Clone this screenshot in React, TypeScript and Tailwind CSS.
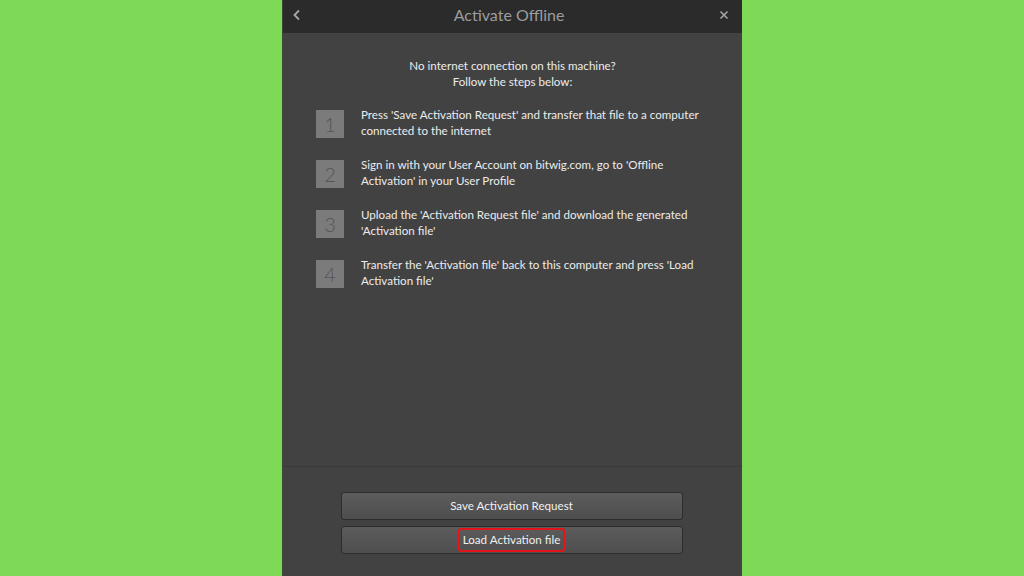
import React from 'react';

const steps = [
  {
    n: '1',
    text: "Press 'Save Activation Request' and transfer that file to a computer connected to the internet",
  },
  {
    n: '2',
    text: "Sign in with your User Account on bitwig.com, go to 'Offline Activation' in your User Profile",
  },
  {
    n: '3',
    text: "Upload the 'Activation Request file' and download the generated 'Activation file'",
  },
  {
    n: '4',
    text: "Transfer the 'Activation file' back to this computer and press 'Load Activation file'",
  },
];

export default function App() {
  return (
    <div
      className="w-[1024px] h-[576px] bg-[#7ed957] flex justify-center overflow-hidden"
      style={{ fontFamily: 'Lato, "Open Sans", sans-serif' }}
    >
      <div className="w-[460px] h-full flex flex-col bg-[#424242] border-l border-[#3a4a34]">
        {/* header */}
        <header className="h-[33px] shrink-0 bg-[#2b2b2b] flex items-center justify-between pl-[8px] pr-[13px] pb-[4px]">
          <svg className="w-[12px] h-[12px] text-[#a8a8a8]" viewBox="0 0 12 12" fill="none" stroke="currentColor" strokeWidth={1.8}>
            <path d="M8 1.5L3.5 6L8 10.5" />
          </svg>
          <h1 className="text-[16px] text-[#9c9c9c] leading-none -ml-[4px]">Activate Offline</h1>
          <svg className="w-[10px] h-[10px] text-[#a8a8a8]" viewBox="0 0 10 10" fill="none" stroke="currentColor" strokeWidth={1.5}>
            <path d="M1.5 1.5l7 7M8.5 1.5l-7 7" />
          </svg>
        </header>

        {/* body */}
        <main className="h-[434px] shrink-0 border-b border-[#3a3a3a] pt-[25px]">
          <p className="text-center text-[11.6px] leading-[16px] text-[#ececec]">
            No internet connection on this machine?
            <br />
            Follow the steps below:
          </p>
          <ol className="mt-[20px] pl-[33px] pr-[30px] flex flex-col gap-[21px]">
            {steps.map((s) => (
              <li key={s.n} className="flex items-start gap-[17px]">
                <div className="w-[28px] h-[28px] shrink-0 bg-[#7b7b7b] flex items-center justify-center text-[20px] font-light text-[#555555]">
                  {s.n}
                </div>
                <p className="text-[11.6px] leading-[16px] text-[#ececec] -mt-[3px] w-[350px]">{s.text}</p>
              </li>
            ))}
          </ol>
        </main>

        {/* buttons */}
        <footer className="flex-1 flex flex-col items-center gap-[6px] pt-[25px]">
          <button className="w-[342px] h-[28px] -ml-[2px] rounded-[3px] border border-[#2c2c2c] bg-gradient-to-b from-[#5c5c5c] to-[#4e4e4e] text-[11.6px] text-[#f0f0f0] flex items-center justify-center">
            Save Activation Request
          </button>
          <button className="w-[342px] h-[28px] -ml-[2px] rounded-[3px] border border-[#2c2c2c] bg-gradient-to-b from-[#5c5c5c] to-[#4e4e4e] text-[11.6px] text-[#f0f0f0] flex items-center justify-center">
            <span className="border-2 border-[#e3141b] rounded-[3px] px-[3px] h-[24px] flex items-center">
              Load Activation file
            </span>
          </button>
        </footer>
      </div>
    </div>
  );
}
